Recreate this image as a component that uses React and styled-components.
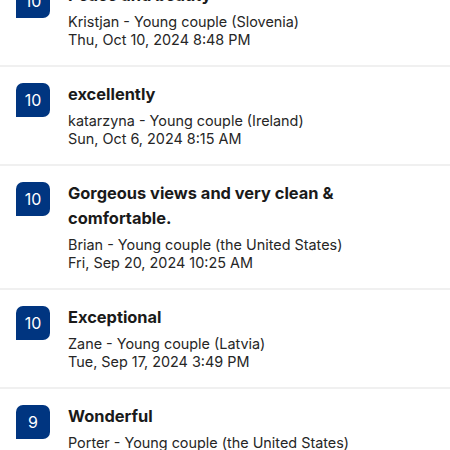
import React from "react";
import styled, { createGlobalStyle } from "styled-components";

const Global = createGlobalStyle`
  html, body { margin: 0; padding: 0; background: #ffffff; }
  body { font-family: Inter, "Liberation Sans", Arial, sans-serif; -webkit-font-smoothing: antialiased; }
  #root { overflow: hidden; height: 450px; }
`;

const List = styled.ul`
  list-style: none;
  margin: -32px 0 0 0;
  padding: 0;
`;

const Item = styled.li`
  display: flex;
  align-items: flex-start;
  gap: 18px;
  padding: 15px 16px 16px 16px;
  border-bottom: 2px solid #f0f0f0;
`;

const Badge = styled.div`
  flex: none;
  width: 34px;
  height: 34px;
  margin-top: 1px;
  background: #003580;
  color: #ffffff;
  border-radius: 7px 7px 7px 0;
  display: flex;
  align-items: center;
  justify-content: center;
  font-size: 16px;
  font-weight: 400;
`;

const Body = styled.div`
  display: flex;
  flex-direction: column;
  gap: 5px;
  min-width: 0;
`;

const Title = styled.div`
  font-size: 16.4px;
  font-weight: 700;
  line-height: 25px;
  color: #1a1a1a;
`;

const Meta = styled.div`
  font-size: 14.4px;
  line-height: 18px;
  color: #262626;
`;

const reviews = [
  { score: 10, title: "Peace and beauty", author: "Kristjan - Young couple (Slovenia)", date: "Thu, Oct 10, 2024 8:48 PM" },
  { score: 10, title: "excellently", author: "katarzyna - Young couple (Ireland)", date: "Sun, Oct 6, 2024 8:15 AM" },
  { score: 10, title: "Gorgeous views and very clean & comfortable.", author: "Brian - Young couple (the United States)", date: "Fri, Sep 20, 2024 10:25 AM" },
  { score: 10, title: "Exceptional", author: "Zane - Young couple (Latvia)", date: "Tue, Sep 17, 2024 3:49 PM" },
  { score: 9, title: "Wonderful", author: "Porter - Young couple (the United States)", date: "Mon, Sep 16, 2024 9:12 AM" },
];

export default function App() {
  return (
    <>
      <Global />
      <List>
        {reviews.map((r, i) => (
          <Item key={i}>
            <Badge>{r.score}</Badge>
            <Body>
              <Title>{r.title}</Title>
              <Meta>
                {r.author}
                <br />
                {r.date}
              </Meta>
            </Body>
          </Item>
        ))}
      </List>
    </>
  );
}
